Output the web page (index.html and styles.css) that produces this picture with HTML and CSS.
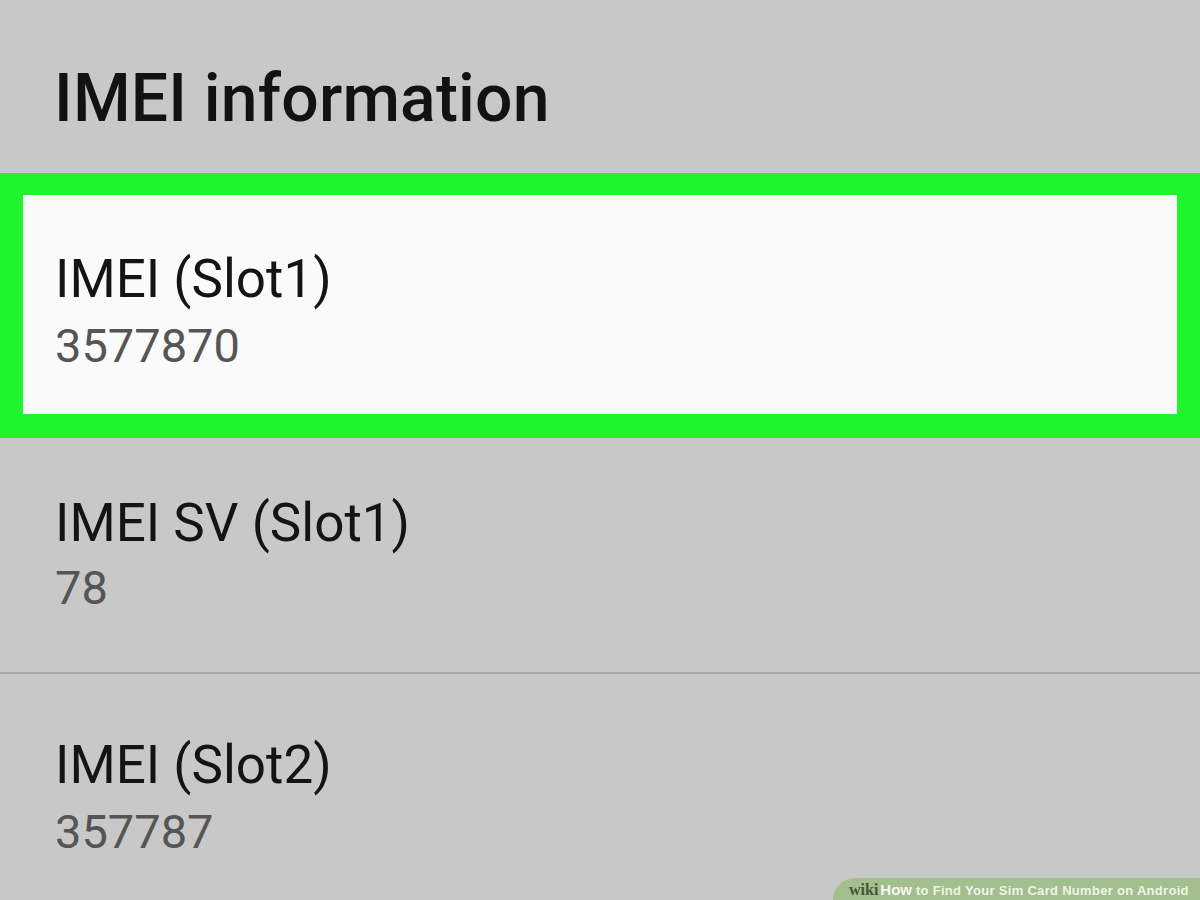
FILE: index.html
```html
<!DOCTYPE html>
<html lang="en">
<head>
<meta charset="utf-8">
<title>IMEI information</title>
<link rel="stylesheet" href="styles.css">
</head>
<body>
<div class="screen">
  <header class="header">
    <h1 class="title">IMEI information</h1>
  </header>
  <div class="highlight">
    <div class="row row--selected">
      <div class="primary">IMEI (Slot1)</div>
      <div class="secondary">3577870</div>
    </div>
  </div>
  <div class="row row--mid">
    <div class="primary">IMEI SV (Slot1)</div>
    <div class="secondary">78</div>
  </div>
  <div class="divider"></div>
  <div class="row row--last">
    <div class="primary">IMEI (Slot2)</div>
    <div class="secondary">357787</div>
  </div>
  <div class="watermark">
    <span class="wm-wiki">wiki</span><span class="wm-how">How</span><span class="wm-rest"> to Find Your Sim Card Number on Android</span>
  </div>
</div>
</body>
</html>
```

FILE: styles.css
```css
html, body {
  margin: 0;
  padding: 0;
}
body {
  background: #c8c8c8;
  font-family: Roboto, "Noto Sans", "Liberation Sans", sans-serif;
}
.screen {
  position: relative;
  width: 1200px;
  height: 900px;
  overflow: hidden;
  background: #c8c8c8;
}
.header {
  height: 173px;
  box-sizing: border-box;
  padding: 61px 0 0 54px;
}
.title {
  margin: 0;
  font-size: 66px;
  line-height: 75px;
  font-weight: 500;
  color: #121212;
  letter-spacing: 0.2px;
}
.highlight {
  border-style: solid;
  border-color: #1ff52f;
  border-width: 22px 23px 24px 23px;
}
.row {
  padding-left: 32px;
  padding-right: 32px;
}
.row--selected {
  background: #fafafa;
  padding-top: 53px;
  padding-bottom: 41px;
}
.row--mid {
  padding-left: 55px;
  padding-top: 54px;
  height: 234px;
  box-sizing: border-box;
}
.row--last {
  padding-left: 55px;
  padding-top: 60px;
}
.primary {
  font-size: 53px;
  line-height: 62px;
  color: #141414;
}
.secondary {
  margin-top: 9px;
  font-size: 47px;
  line-height: 54px;
  color: #555555;
}
.row--mid .secondary {
  margin-top: 7px;
}
.divider {
  height: 2px;
  background: #a9a9a9;
}
.watermark {
  position: absolute;
  right: 0;
  bottom: 0;
  width: 367px;
  height: 22px;
  box-sizing: border-box;
  padding-left: 16px;
  background: #a2bf8d;
  border-top-left-radius: 22px 22px;
  font-family: "Liberation Sans", Arial, sans-serif;
  font-weight: bold;
  font-size: 13px;
  line-height: 23px;
  white-space: nowrap;
}
.wm-wiki {
  color: #46553a;
  font-family: "Liberation Serif", serif;
  font-size: 16px;
  letter-spacing: 0;
}
.wm-how {
  color: #f4f8ef;
  font-size: 15px;
  margin-left: 2px;
}
.wm-rest {
  color: #eef4e8;
  letter-spacing: 0.3px;
}
```
